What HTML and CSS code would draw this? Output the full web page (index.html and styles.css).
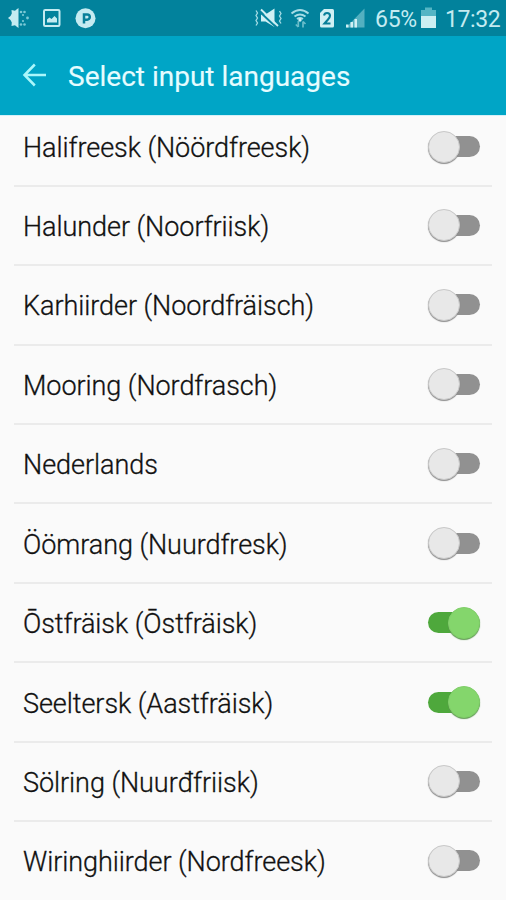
FILE: index.html
```
<!DOCTYPE html>
<html lang="en">
<head>
<meta charset="utf-8">
<title>Select input languages</title>
<link rel="stylesheet" href="styles.css">
</head>
<body>
<div class="screen">
  <div class="status">
    <svg class="status-icons" width="100" height="36" viewBox="0 0 100 36" fill="#c4ebf1">
      <path d="M18.500 8l-1.700 1.300-1.800 1.500-3.500-.8.300 3.500-1.300 2.500-2.500 2 2.500 2 1.300 2.500-.3 3.500 3.500-.8 1.800 1.500 1.700 1.300z"/>
      <g fill="#7cc9d5"><circle cx="21" cy="12" r="1.300"/><circle cx="24.500" cy="12" r="1.300"/><circle cx="23" cy="15" r="1.100"/><circle cx="27.500" cy="18" r="1.400"/><circle cx="23" cy="21" r="1.100"/><circle cx="24.500" cy="24.500" r="1.300"/><circle cx="21" cy="24.500" r="1.300"/></g>
      <rect x="44" y="10" width="15.500" height="16" rx="1.200" fill="none" stroke="#c4ebf1" stroke-width="2"/>
      <path d="M47 22.500v-3l2.500-2 2 1.500 3-3 2.500 2.500v4z"/>
      <circle cx="85.500" cy="18.300" r="10"/>
      <path d="M84 23.500v-9h3.200a2.600 2.600 0 0 1 0 5.200H84" fill="none" stroke="#087f99" stroke-width="2.500"/>
    </svg>
    <div class="status-right">
      <svg width="114" height="36" viewBox="252 0 114 36" fill="#d0f0f4">
        <path d="M261 14.500h4.500l9-6v18.500l-9-5.500H261z"/>
        <path d="M259.500 11.500l17 16" stroke="#07859e" stroke-width="2"/>
        <path d="M261 9.500l17 16.500" stroke="#d0f0f4" stroke-width="1.800"/>
        <path d="M256 10.500l1.500 2.500-1.500 2.500 1.500 2.500-1.500 2.500 1.500 2.500-1.500 2.500M279.500 11l1.500 2.500-1.500 2.500 1.500 2.500-1.500 2.500 1.500 2.500" fill="none" stroke="#a5dce5" stroke-width="1.300"/>
        <g fill="none" stroke="#a5dce5" stroke-width="2"><path d="M291.500 13.500q8.500-7 17 0"/><path d="M294.500 16.500q5.500-4 11 0"/><path d="M297 19q3-2 6 0"/></g>
        <circle cx="300" cy="20" r="1.700"/>
        <path d="M298.300 21v6M295.800 24.500l2.500 2.500M303 27.500v-6M303 21.500l2.500 2.500" stroke="#69bdca" stroke-width="1.700" fill="none"/>
        <path d="M324 9h8.500a1.500 1.500 0 0 1 1.500 1.500v15.500a1.500 1.500 0 0 1-1.500 1.500h-11a1.500 1.500 0 0 1-1.500-1.500V13z"/>
        <path d="M324 15.500q.5-2.500 3-2.500 3 0 3 2.800 0 1.500-2 3.700l-3.500 4H330.500" fill="none" stroke="#087f99" stroke-width="2.100"/>
        <path d="M364.500 8.500v19H346z" fill="#53b0c0"/>
        <path d="M346 24.500h2.500v3H346zM350.500 22h2.500v5.500h-2.500zM354.500 19h2.500v8.500h-2.500z"/>
      </svg>
      <span class="battery-text">65%</span>
      <svg class="battery" width="15" height="36" viewBox="0 0 15 36"><path d="M0 10h4V7.500h7V10h4v6H0z" fill="#55b5c4"/><path d="M0 16h15v12H0z" fill="#cceff2"/></svg>
      <span class="clock">17:32</span>
    </div>
  </div>
  <header class="bar">
    <svg width="24" height="24" viewBox="0 0 24 24" fill="none" stroke="#aaf7fb" stroke-width="2.500"><path d="M12.800 1.500L2.500 12l10.300 10.500M2.500 12h21.500"/></svg>
    <h1 class="title">Select input languages</h1>
  </header>
  <main class="list">
    <div class="row"><span class="name">Halifreesk (Nöördfreesk)</span><span class="switch"></span></div>
    <div class="row"><span class="name">Halunder (Noorfriisk)</span><span class="switch"></span></div>
    <div class="row"><span class="name">Karhiirder (Noordfräisch)</span><span class="switch"></span></div>
    <div class="row"><span class="name">Mooring (Nordfrasch)</span><span class="switch"></span></div>
    <div class="row"><span class="name">Nederlands</span><span class="switch"></span></div>
    <div class="row"><span class="name">Öömrang (Nuurdfresk)</span><span class="switch"></span></div>
    <div class="row"><span class="name">Ōstfräisk (Ōstfräisk)</span><span class="switch on"></span></div>
    <div class="row"><span class="name">Seeltersk (Aastfräisk)</span><span class="switch on"></span></div>
    <div class="row"><span class="name">Sölring (Nuurđfriisk)</span><span class="switch"></span></div>
    <div class="row"><span class="name">Wiringhiirder (Nordfreesk)</span><span class="switch"></span></div>
  </main>
</div>
</body>
</html>
```
FILE: styles.css
```
* { box-sizing: border-box; }
body { margin: 0; font-family: Roboto, sans-serif; background: #fafafa; }
.screen { width: 506px; height: 900px; overflow: hidden; display: flex; flex-direction: column; }
.status { height: 36px; flex: none; background: #02829c; display: flex; justify-content: space-between; color: #c4ebf1; }
.status svg { display: block; flex: none; }
.status-right { display: flex; width: 254px; line-height: 39px; font-size: 23px; }
.battery-text { width: 42px; margin-left: 9px; white-space: nowrap; letter-spacing: -0.3px; }
.battery { margin-left: 4px; }
.clock { margin-left: 9px; white-space: nowrap; letter-spacing: -0.4px; }
.bar { height: 78.500px; flex: none; background: #00a5c6; display: flex; align-items: center; padding-left: 22px; }
.title { margin: 3px 0 0 22px; font-size: 28px; font-weight: 400; line-height: 36px; color: #e6fcff; -webkit-text-stroke: 0.15px #e6fcff; white-space: nowrap; }
.list { flex: 1; min-height: 0; overflow: hidden; border-top: 1px solid #d5f0f8; }
.row { height: 79.440px; margin: 0 14px; padding: 0 12px 0 9px; border-bottom: 2px solid #ebebeb; display: flex; align-items: center; justify-content: space-between; }
.row:first-child { height: 71.200px; padding-bottom: 7px; }
.name { font-size: 27px; font-weight: 300; line-height: 36px; color: #111; -webkit-text-stroke: 0.3px #111; letter-spacing: -0.05px; white-space: nowrap; padding-top: 3px; }
.switch { width: 52px; height: 30px; margin-bottom: 2px; display: grid; align-items: center; }
.switch::before, .switch::after { content: ""; grid-area: 1 / 1; }
.switch::before { height: 21px; border-radius: 10.500px; background: #919191; }
.switch::after { width: 30px; height: 30px; border-radius: 50%; background: #e8e8e8; border: 1px solid #c9c9c9; box-shadow: 0 1px 1px #8a8a8a; }
.switch.on::before { background: #4ea83c; }
.switch.on::after { justify-self: end; background: #84d66c; border-color: #80cf69; box-shadow: 0 1px 1px #5e9751; }
```
